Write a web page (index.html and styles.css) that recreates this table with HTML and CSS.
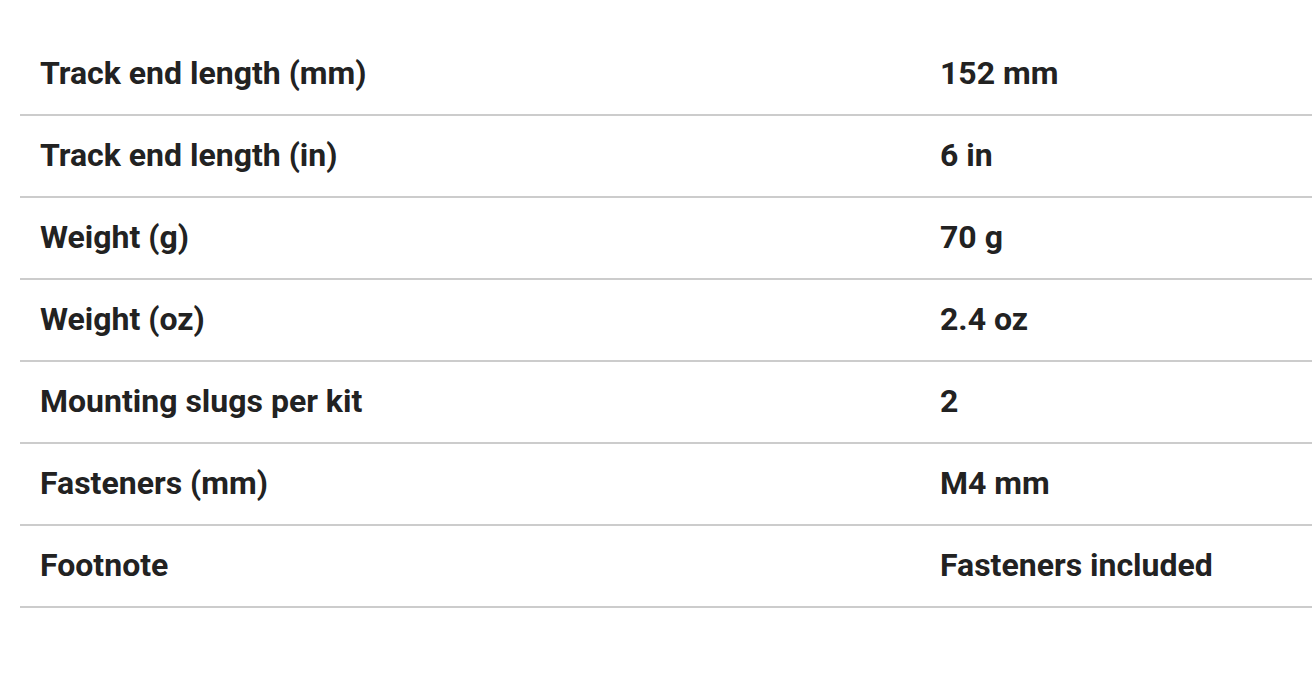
FILE: index.html
```html
<!DOCTYPE html>
<html lang="en">
<head>
<meta charset="utf-8">
<title>Specifications</title>
<link rel="stylesheet" href="styles.css">
</head>
<body>
<div class="page">
  <table class="specs">
    <tbody>
      <tr><th>Track end length (mm)</th><td>152 mm</td></tr>
      <tr><th>Track end length (in)</th><td>6 in</td></tr>
      <tr><th>Weight (g)</th><td>70 g</td></tr>
      <tr><th>Weight (oz)</th><td>2.4 oz</td></tr>
      <tr><th>Mounting slugs per kit</th><td>2</td></tr>
      <tr><th>Fasteners (mm)</th><td>M4 mm</td></tr>
      <tr><th>Footnote</th><td>Fasteners included</td></tr>
    </tbody>
  </table>
</div>
</body>
</html>
```

FILE: styles.css
```css
html, body {
  margin: 0;
  padding: 0;
  background: #ffffff;
}
body {
  font-family: Roboto, "Liberation Sans", Arial, sans-serif;
  color: #222222;
}
.page {
  padding: 34px 0 0 20px;
}
.specs {
  width: 100%;
  border-collapse: collapse;
}
.specs th,
.specs td {
  height: 78px;
  padding: 0 20px 2px;
  box-sizing: content-box;
  font-size: 32px;
  font-weight: 700;
  text-align: left;
  vertical-align: middle;
  border-bottom: 2px solid #cccccc;
  line-height: 1;
}
.specs th {
  width: 860px;
}
```
